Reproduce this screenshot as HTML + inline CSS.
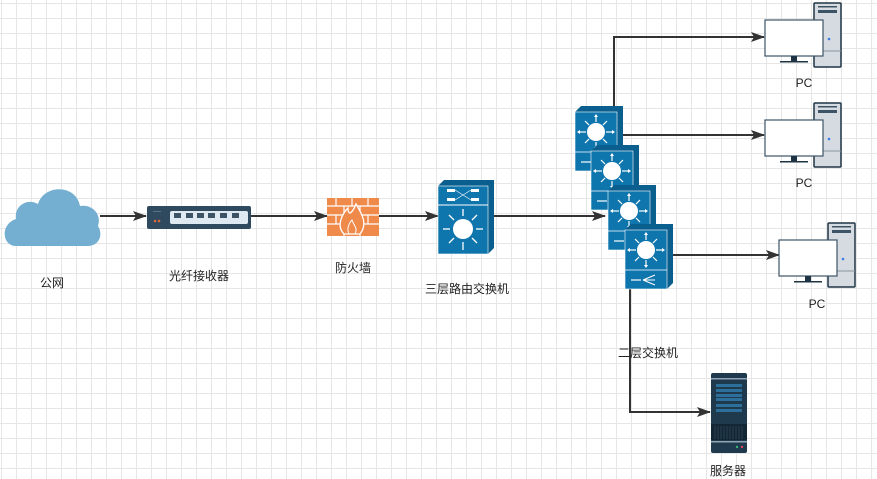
<!DOCTYPE html>
<html><head><meta charset="utf-8"><style>
html,body{margin:0;padding:0}
body{width:877px;height:477px;overflow:hidden;background:#fff;
background-image:linear-gradient(#e6e6e6 1px,transparent 1px),linear-gradient(90deg,#e6e6e6 1px,transparent 1px);
background-size:15px 15px;background-position:1px 3px;position:relative;
font-family:"Liberation Sans","Noto Sans CJK SC",sans-serif;font-size:12px;color:#222}
.l{position:absolute;transform:translateX(-50%);white-space:nowrap}
svg{position:absolute;left:0;top:0}
</style></head><body>
<svg width="877" height="477" viewBox="0 0 877 477">
<defs>
<marker id="a" markerWidth="14" markerHeight="10" refX="13" refY="5" orient="auto" markerUnits="userSpaceOnUse"><path d="M0,0 L14,5 L0,10 L3,5Z" fill="#333"/></marker>
<g id="sw">
<path d="M0,6 L6,0 L48,0 L48,59 L42,65 Z" fill="#0b5f8e"/>
<rect x="0" y="6" width="42" height="59" fill="#0f75ad" stroke="#fff" stroke-width="0.6"/>
<line x1="0" y1="46" x2="42" y2="46" stroke="#fff" stroke-width="0.8"/>
<circle cx="21" cy="26" r="9" fill="#fff"/>
<g stroke="#fff" stroke-width="1.2" fill="#fff">
<line x1="21" y1="10" x2="21" y2="16"/><line x1="21" y1="36" x2="21" y2="42"/>
<line x1="4" y1="26" x2="11" y2="26"/><line x1="31" y1="26" x2="38" y2="26"/>
<line x1="10" y1="15" x2="14" y2="19"/><line x1="32" y1="15" x2="28" y2="19"/>
<line x1="10" y1="37" x2="14" y2="33"/><line x1="32" y1="37" x2="28" y2="33"/>
<path d="M21,8 L19,11 L23,11Z M21,44 L19,41 L23,41Z M2,26 L5,24 L5,28Z M40,26 L37,24 L37,28Z" stroke="none"/>
</g>
<line x1="6" y1="56" x2="16" y2="56" stroke="#fff" stroke-width="1.2"/>
<path d="M18,56 L30,51 M18,56 L30,56 M18,56 L30,61" stroke="#fff" stroke-width="1"/>
</g>
<g id="pc">
<rect x="49" y="0" width="27" height="64" rx="1" fill="#d5dbe0" stroke="#1e3445" stroke-width="1.5"/>
<rect x="53" y="3" width="19" height="1.5" fill="#3d5466"/>
<rect x="53" y="7" width="19" height="3" fill="#3d5466"/>
<circle cx="64" cy="36" r="1.3" fill="#3b7de0"/>
<line x1="49" y1="48" x2="76" y2="48" stroke="#8a959e"/>
<rect x="0" y="17" width="58" height="36" fill="#fff" stroke="#3d5466" stroke-width="1.2"/>
<rect x="26" y="53" width="6" height="5" fill="#1e3445"/>
<rect x="15" y="58" width="28" height="1.5" fill="#1e3445"/>
</g>
</defs>
<!-- cloud -->
<path d="M16,246 C2,246 0,224 16,219 C14,205 28,198 38,204 C44,184 76,184 80,206 C92,204 102,214 98,226 C104,236 98,246 88,246 Z" fill="#74aed0"/>
<!-- lines -->
<g stroke="#333" stroke-width="2" fill="none">
<line x1="100" y1="216" x2="146" y2="216" marker-end="url(#a)"/>
<line x1="251" y1="216" x2="327" y2="216" marker-end="url(#a)"/>
<line x1="379" y1="216" x2="438" y2="216" marker-end="url(#a)"/>
<line x1="494" y1="216" x2="605" y2="216" marker-end="url(#a)"/>
<polyline points="614,106 614,37 764,37" marker-end="url(#a)"/>
<line x1="622" y1="135" x2="764" y2="135" marker-end="url(#a)"/>
<line x1="673" y1="255" x2="779" y2="255" marker-end="url(#a)"/>
<polyline points="630,289 630,412 710,412" marker-end="url(#a)"/>
</g>
<!-- fiber receiver -->
<rect x="147" y="206" width="104" height="23" rx="2" fill="#2f4a5f"/>
<rect x="153" y="211" width="8" height="1" fill="#5a7184"/>
<circle cx="155" cy="221" r="1.3" fill="#e0683a"/><circle cx="159" cy="221" r="1.3" fill="#e0683a"/>
<rect x="170" y="211" width="78" height="13" rx="2" fill="#dfe9f1"/>
<g fill="#3d5466"><rect x="174" y="213" width="7" height="5"/><rect x="186" y="213" width="7" height="5"/><rect x="197" y="213" width="7" height="5"/><rect x="208" y="213" width="7" height="5"/><rect x="220" y="213" width="7" height="5"/><rect x="232" y="213" width="7" height="5"/></g>
<!-- firewall -->
<rect x="327" y="198" width="52" height="38" fill="#f08a4b"/>
<g stroke="#fff" stroke-width="1.2">
<line x1="327" y1="206" x2="379" y2="206"/><line x1="327" y1="215" x2="379" y2="215"/><line x1="327" y1="224" x2="379" y2="224"/>
<line x1="336" y1="198" x2="336" y2="206"/><line x1="352" y1="198" x2="352" y2="206"/><line x1="368" y1="198" x2="368" y2="206"/>
<line x1="344" y1="206" x2="344" y2="215"/><line x1="360" y1="206" x2="360" y2="215"/>
<line x1="336" y1="215" x2="336" y2="224"/><line x1="368" y1="215" x2="368" y2="224"/>
<line x1="344" y1="224" x2="344" y2="236"/><line x1="360" y1="224" x2="360" y2="236"/>
</g>
<path d="M344,234 C336,226 342,214 348,208 C348,216 352,214 356,204 C362,214 368,224 360,234 Z" fill="#f08a4b" stroke="#fff" stroke-width="1.3"/>
<path d="M349,234 C346,228 350,222 352,220 C354,226 358,228 355,234Z" fill="none" stroke="#fff" stroke-width="1"/>
<!-- L3 switch -->
<path d="M438,186 L444,180 L494,180 L494,248 L488,254 Z" fill="#0b5f8e"/>
<rect x="438" y="186" width="50" height="68" fill="#0f75ad" stroke="#fff" stroke-width="0.6"/>
<line x1="438" y1="205" x2="488" y2="205" stroke="#fff"/>
<rect x="447" y="189" width="8" height="3" fill="#fff"/><rect x="471" y="189" width="8" height="3" fill="#fff"/>
<rect x="447" y="198" width="8" height="3" fill="#fff"/><rect x="471" y="198" width="8" height="3" fill="#fff"/>
<path d="M455,190 L471,200 M455,200 L471,190" stroke="#fff" stroke-width="0.6"/>
<circle cx="463" cy="229" r="10" fill="#fff"/>
<g stroke="#fff" stroke-width="1.3">
<line x1="463" y1="209" x2="463" y2="216"/><line x1="463" y1="242" x2="463" y2="250"/>
<line x1="443" y1="229" x2="450" y2="229"/><line x1="476" y1="229" x2="483" y2="229"/>
<line x1="449" y1="215" x2="454" y2="220"/><line x1="477" y1="215" x2="472" y2="220"/>
<line x1="449" y1="243" x2="454" y2="238"/><line x1="477" y1="243" x2="472" y2="238"/>
</g>
<!-- stacked switches -->
<use href="#sw" x="575" y="106"/>
<use href="#sw" x="591" y="145"/>
<use href="#sw" x="608" y="185"/>
<use href="#sw" x="625" y="224"/>
<!-- PCs -->
<use href="#pc" x="765" y="3"/>
<use href="#pc" x="765" y="103"/>
<use href="#pc" x="779" y="223"/>
<!-- server -->
<rect x="711" y="373" width="36" height="80" rx="2" fill="#1f3a4d"/>
<rect x="711" y="378" width="36" height="1.5" fill="#8fa3b2"/>
<g fill="#2c6f9a"><rect x="716" y="384" width="26" height="3"/><rect x="716" y="389" width="26" height="3"/><rect x="716" y="394" width="26" height="3"/><rect x="716" y="398" width="26" height="3"/><rect x="716" y="404" width="26" height="3"/><rect x="716" y="409" width="26" height="3"/></g>
<rect x="711" y="424" width="36" height="16" fill="#132634"/>
<g stroke="#2f4a5f" stroke-width="0.8"><line x1="715" y1="426" x2="715" y2="439"/><line x1="718" y1="426" x2="718" y2="439"/><line x1="721" y1="426" x2="721" y2="439"/><line x1="724" y1="426" x2="724" y2="439"/><line x1="727" y1="426" x2="727" y2="439"/><line x1="730" y1="426" x2="730" y2="439"/><line x1="733" y1="426" x2="733" y2="439"/><line x1="736" y1="426" x2="736" y2="439"/><line x1="739" y1="426" x2="739" y2="439"/><line x1="742" y1="426" x2="742" y2="439"/></g>
<rect x="711" y="441" width="36" height="1.5" fill="#8fa3b2"/>
<circle cx="737" cy="447" r="1.2" fill="#3cb371"/><circle cx="742" cy="447" r="1.2" fill="#e0445a"/>
</svg>
<div class="l" style="left:52px;top:274px">公网</div>
<div class="l" style="left:199px;top:267px">光纤接收器</div>
<div class="l" style="left:353px;top:259px">防火墙</div>
<div class="l" style="left:467px;top:280px">三层路由交换机</div>
<div class="l" style="left:648px;top:344px">二层交换机</div>
<div class="l" style="left:804px;top:76px">PC</div>
<div class="l" style="left:804px;top:176px">PC</div>
<div class="l" style="left:817px;top:297px">PC</div>
<div class="l" style="left:728px;top:462px">服务器</div>
</body></html>
